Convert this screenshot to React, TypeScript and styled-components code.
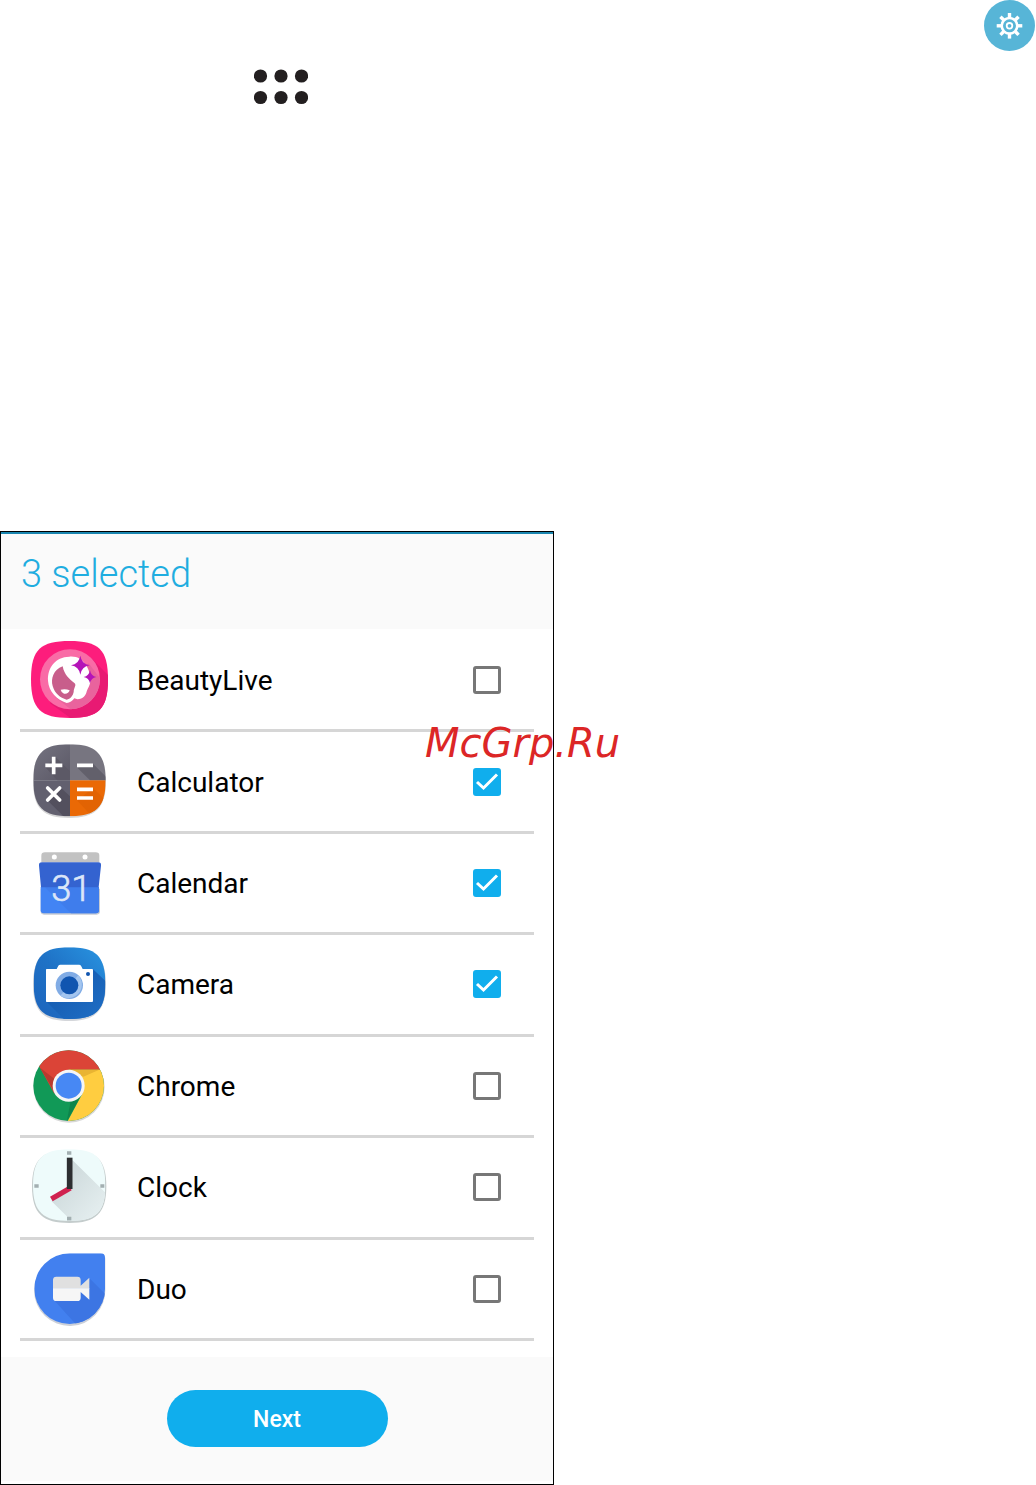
import React, { useState } from "react";
import styled, { createGlobalStyle } from "styled-components";

const GlobalStyle = createGlobalStyle`
  *, *::before, *::after { box-sizing: border-box; }
  body {
    margin: 0;
    background: #fff;
    color: #000;
    font-family: Roboto, "Noto Sans", sans-serif;
  }
`;

const Page = styled.main`
  display: flex;
  flex-direction: column;
`;

const TopBar = styled.header`
  display: flex;
  align-items: flex-start;
  justify-content: space-between;
  min-height: 531px;
  padding: 0 1px 0 254px;
`;

const DotsIcon = styled.svg`
  width: 54px;
  height: 36px;
  margin-top: 69px;
  fill: #231f20;
`;

const GearIcon = styled.svg`
  width: 51px;
  height: 51px;
`;

const Panel = styled.form`
  position: relative;
  width: 100%;
  max-width: 554px;
  padding-bottom: 3px;
  border: 1px solid #000;
`;

const PanelHeader = styled.div`
  height: 97px;
  padding: 16px 20px;
  border-top: 2px solid #1a86b0;
  background: #fafafa;
`;

const Title = styled.h1`
  margin: 0;
  font-size: 38px;
  line-height: 48px;
  font-weight: 300;
  color: #1fade0;
`;

const AppList = styled.ul`
  display: grid;
  grid-auto-rows: 1fr;
  height: 728px;
  margin: 0;
  padding: 2px 19px 16px;
  list-style: none;
`;

const AppRow = styled.li`
  display: flex;
  border-bottom: 3px solid #d6d6d6;
`;

const RowLabel = styled.label`
  flex: 1;
  display: flex;
  align-items: center;
  gap: 28px;
  padding: 0 33px 0 9px;
  cursor: pointer;
`;

const AppIcon = styled.svg`
  flex: none;
  width: 80px;
  height: 80px;
`;

const AppName = styled.span`
  flex: 1;
  padding-top: 2px;
  font-size: 28px;
  line-height: 32px;
`;

const CheckHolder = styled.span`
  display: grid;
  width: 28px;
  height: 28px;
  > * {
    grid-area: 1 / 1;
  }
`;

const CheckInput = styled.input`
  appearance: none;
  width: 28px;
  height: 28px;
  margin: 0;
  border: 3px solid #777;
  border-radius: 3px;
  background: #fff;
  cursor: pointer;
  &:checked {
    border-color: #10aeed;
    background: #10aeed;
  }
`;

const CheckMark = styled.svg`
  width: 28px;
  height: 28px;
  fill: none;
  stroke: #fff;
  stroke-width: 3;
  pointer-events: none;
`;

const PanelFooter = styled.div`
  display: flex;
  justify-content: center;
  padding: 33px 19px 34px;
  background: #fafafa;
`;

const NextButton = styled.button`
  width: 221px;
  height: 57px;
  padding: 2px 0 0;
  border: 0;
  border-radius: 29px;
  background: #10aeed;
  color: #fff;
  font-family: inherit;
  font-size: 23px;
  line-height: 28px;
  font-weight: 500;
  cursor: pointer;
`;

const Watermark = styled.span`
  position: absolute;
  top: 188px;
  left: 424px;
  font-family: "DejaVu Sans", sans-serif;
  font-style: italic;
  font-size: 40px;
  line-height: 46px;
  white-space: nowrap;
  color: #dc2626;
  pointer-events: none;
`;

const BeautyArt = () => (
  <AppIcon viewBox="27 15 240 240" aria-hidden="true">
    <defs>
      <clipPath id="beautyClip">
        <path d="M149 18C235 18 264 42 264 133S235 249 149 249 33 224 33 133 63 18 149 18Z" />
      </clipPath>
    </defs>
    <g clipPath="url(#beautyClip)">
      <rect x="30" y="15" width="240" height="240" fill="#fd1d7c" />
      <path d="M214 70L270 126V255H160L90 205Z" fill="#e81a73" />
    </g>
    <circle cx="150" cy="133" r="90" fill="#f96ba6" />
    <path d="M206 85L239 128A90 90 0 0 1 152 223L105 186Z" fill="#e9639d" />
    <path
      d="M148 65C106 66 82 98 84 137C86 170 111 194 140 204C149 204 158 198 163 190C176 197 195 188 199 173C202 160 211 151 211 137C212 106 195 81 180 72C171 66 160 64 148 65Z"
      fill="#fff"
    />
    <path
      d="M128 94C100 104 92 132 98 153C104 175 120 188 140 194C151 192 159 182 161 171C161 157 171 151 163 144C149 132 133 121 128 94Z"
      fill="#c85e8b"
    />
    <path d="M122 164Q136 160 149 166Q145 178 132 176Q124 173 122 164Z" fill="#fff" />
    <path d="M181 62Q185 87 209 91Q185 95 181 119Q177 95 153 91Q177 87 181 62Z" fill="#b414b8" />
    <path d="M210 106Q213 123 229 126Q213 129 210 145Q207 129 191 126Q207 123 210 106Z" fill="#b414b8" />
  </AppIcon>
);

const CalculatorArt = () => (
  <AppIcon viewBox="27 20 240 240" aria-hidden="true">
    <defs>
      <clipPath id="calcClip">
        <path d="M148 27C225 27 257 53 257 135S225 243 148 243 40 217 40 135 71 27 148 27Z" />
      </clipPath>
      <linearGradient id="calcGrey" x1="0" y1="0" x2="1" y2="1">
        <stop offset="0" stopColor="#757481" />
        <stop offset="1" stopColor="#5b5866" />
      </linearGradient>
    </defs>
    <path d="M148 31C225 31 258 57 258 138S225 248 148 248 39 222 39 138 71 31 148 31Z" fill="#d6d6d6" />
    <g clipPath="url(#calcClip)">
      <rect x="38" y="25" width="112" height="110" fill="url(#calcGrey)" />
      <rect x="150" y="25" width="112" height="110" fill="#777580" />
      <rect x="38" y="135" width="112" height="112" fill="#62606f" />
      <path d="M106 64L150 108V135H112L76 96Z" fill="#5c5966" />
      <path d="M219 85L262 128V135H210L172 97Z" fill="#62606b" />
      <path d="M120 155L150 183V247H135L82 195Z" fill="#53505e" />
      <rect x="150" y="135" width="112" height="112" fill="#ea6905" />
      <path d="M219 158L262 200V247H220L172 196Z" fill="#e26303" />
    </g>
    <path d="M101 64V117M76 90H127M171 90H219M171 162H219M171 188H219" stroke="#fff" strokeWidth="11" />
    <path d="M83 158L119 194M119 158L83 194" stroke="#fff" strokeWidth="11" strokeLinecap="round" />
  </AppIcon>
);

const CalendarArt = () => (
  <AppIcon viewBox="27 8 240 240" aria-hidden="true">
    <path d="M64 66V46Q64 36 75 36H227Q238 36 238 46V66Z" fill="#c2c2c2" />
    <circle cx="103" cy="50" r="7.500" fill="#fff" />
    <circle cx="195" cy="50" r="7.500" fill="#fff" />
    <path d="M62 145H240V213Q240 223 230 223H72Q62 223 62 213Z" fill="#c7cbd3" />
    <path d="M62 140H237V210Q237 219 228 219H71Q62 219 62 210Z" fill="#4284f4" />
    <path d="M75 141H237V210Q237 219 228 219H153Z" fill="#3f7dec" />
    <path d="M66 66H235Q244 66 243 76L236 141H63L57 76Q56 66 66 66Z" fill="#3463d0" />
    <text
      x="154"
      y="183"
      textAnchor="middle"
      fontFamily="Roboto, sans-serif"
      fontWeight="300"
      fontSize="109"
      fill="#dce6f8"
      stroke="#dce6f8"
      strokeWidth="2"
    >
      31
    </text>
  </AppIcon>
);

const CameraArt = () => (
  <AppIcon viewBox="27 11 240 240" aria-hidden="true">
    <defs>
      <clipPath id="camClip">
        <path d="M148 21C226 21 256 46 256 129S226 236 148 236 41 211 41 129 71 21 148 21Z" />
      </clipPath>
      <linearGradient id="camBlue" x1="1" y1="0" x2="0" y2="1">
        <stop offset="0" stopColor="#2996e2" />
        <stop offset="0.5" stopColor="#1f72c6" />
        <stop offset="1" stopColor="#1c63bc" />
      </linearGradient>
      <linearGradient id="camShade" x1="0" y1="0" x2="1" y2="1">
        <stop offset="0" stopColor="#1356aa" />
        <stop offset="1" stopColor="#1f6fc6" />
      </linearGradient>
    </defs>
    <path d="M148 26C226 26 258 52 258 132S226 242 148 242 39 216 39 132 71 26 148 26Z" fill="#d4d6da" />
    <g clipPath="url(#camClip)">
      <rect x="38" y="18" width="222" height="222" fill="url(#camBlue)" />
      <path d="M219 87L260 125V240H135L80 184Z" fill="url(#camShade)" />
    </g>
    <path
      d="M80 86H110L115 76Q117 73 121 73H177Q181 73 183 76L188 86H216Q219 86 219 89V182Q219 185 216 185H80Q78 185 78 182V88Q78 86 80 86Z"
      fill="#fff"
    />
    <circle cx="148" cy="135" r="41" fill="#81ace5" />
    <path d="M175 105A41 41 0 0 1 121 166Z" fill="#a3c5ef" />
    <circle cx="148" cy="135" r="27" fill="#1055b0" />
    <circle cx="204" cy="101" r="6" fill="#1055b0" />
  </AppIcon>
);

const ChromeArt = () => (
  <AppIcon viewBox="27 17 240 240" aria-hidden="true">
    <defs>
      <clipPath id="chromeClip">
        <circle cx="146" cy="136" r="106" />
      </clipPath>
    </defs>
    <circle cx="147" cy="140" r="107" fill="#d8d8d8" />
    <g clipPath="url(#chromeClip)">
      <rect x="36" y="28" width="220" height="220" fill="#119957" />
      <path d="M30 28H256V88H146L103 160L60 82Z" fill="#db4437" />
      <path d="M146 88H256V248H140L187 160Z" fill="#ffcd40" />
      <path d="M60 82L99 148L104 116Z" fill="#b93a2f" />
      <path d="M146 88H238L190 109Z" fill="#e9b432" />
      <path d="M187 158L140 244L152 183Z" fill="#0e854b" />
    </g>
    <circle cx="146" cy="136" r="48" fill="#f5f5f5" />
    <circle cx="146" cy="136" r="39" fill="#4788f4" />
  </AppIcon>
);

const ClockArt = () => (
  <AppIcon viewBox="27 21 240 240" aria-hidden="true">
    <defs>
      <clipPath id="clockClip">
        <path d="M148 28C226 28 256 53 256 136S226 243 148 243 39 218 39 136 71 28 148 28Z" />
      </clipPath>
      <linearGradient id="clockShade" x1="0" y1="0" x2="1" y2="1">
        <stop offset="0" stopColor="#c6d3d5" />
        <stop offset="1" stopColor="#e9f2f3" />
      </linearGradient>
    </defs>
    <path d="M148 31C227 31 259 57 259 139S227 249 148 249 36 223 36 139 71 31 148 31Z" fill="#c4cccc" />
    <g clipPath="url(#clockClip)">
      <rect x="36" y="25" width="224" height="222" fill="#eefbfb" />
      <path d="M157 60L262 164V248H160L94 183L140 146Z" fill="url(#clockShade)" />
    </g>
    <path d="M141 39H154M141 236H154M43 138H56M241 138H253" stroke="#a3afb1" strokeWidth="11" />
    <path d="M151 144L94 177" stroke="#d0224f" strokeWidth="16" />
    <path d="M149 53V147" stroke="#2d2e31" strokeWidth="17" />
  </AppIcon>
);

const DuoArt = () => (
  <AppIcon viewBox="27 26 240 240" aria-hidden="true">
    <defs>
      <clipPath id="duoClip">
        <path d="M149 39H242Q255 39 255 52V145A106 106 0 1 1 149 39Z" />
      </clipPath>
    </defs>
    <path d="M149 43H243Q256 43 256 55V146A107 107 0 1 1 149 43Z" fill="#ccd0d8" />
    <g clipPath="url(#duoClip)">
      <rect x="40" y="36" width="220" height="220" fill="#4280ef" />
      <path d="M207 112L260 165V260H175L101 178L180 160Z" fill="#3c75e3" />
    </g>
    <path d="M99 145V119Q99 109 109 109H172Q182 109 182 119V136L208 112V145Z" fill="#e0e0e0" />
    <path d="M99 144H208V178L182 155V172Q182 182 172 182H109Q99 182 99 172Z" fill="#f6f6f6" />
  </AppIcon>
);

const apps = [
  { id: "beautylive", name: "BeautyLive", Art: BeautyArt, selected: false },
  { id: "calculator", name: "Calculator", Art: CalculatorArt, selected: true },
  { id: "calendar", name: "Calendar", Art: CalendarArt, selected: true },
  { id: "camera", name: "Camera", Art: CameraArt, selected: true },
  { id: "chrome", name: "Chrome", Art: ChromeArt, selected: false },
  { id: "clock", name: "Clock", Art: ClockArt, selected: false },
  { id: "duo", name: "Duo", Art: DuoArt, selected: false },
];

const teeth = [0, 45, 90, 135, 180, 225, 270, 315];

export default function App() {
  const [selected, setSelected] = useState<string[]>(
    apps.filter((app) => app.selected).map((app) => app.id)
  );

  const toggle = (id: string) =>
    setSelected((current) =>
      current.includes(id) ? current.filter((item) => item !== id) : [...current, id]
    );

  return (
    <Page>
      <GlobalStyle />
      <TopBar>
        <DotsIcon viewBox="0 0 54 36" aria-hidden="true">
          {[6.5, 27, 47.5].map((x) => (
            <React.Fragment key={x}>
              <circle cx={x} cy="7" r="6.600" />
              <circle cx={x} cy="28.500" r="6.600" />
            </React.Fragment>
          ))}
        </DotsIcon>
        <GearIcon viewBox="0 0 51 51" aria-hidden="true">
          <circle cx="25.500" cy="25.500" r="25.500" fill="#57b5d7" />
          {teeth.map((angle) => (
            <path
              key={angle}
              d="M23.800 13H27.200V18H23.800Z"
              fill="#fff"
              transform={`rotate(${angle} 25.500 25.800)`}
            />
          ))}
          <circle cx="25.500" cy="25.800" r="7.800" fill="none" stroke="#fff" strokeWidth="2.600" />
          <circle cx="25.500" cy="25.800" r="2.800" fill="none" stroke="#fff" strokeWidth="1.800" />
        </GearIcon>
      </TopBar>
      <Panel onSubmit={(event) => event.preventDefault()}>
        <PanelHeader>
          <Title>{selected.length} selected</Title>
        </PanelHeader>
        <AppList>
          {apps.map(({ id, name, Art }) => {
            const checked = selected.includes(id);
            return (
              <AppRow key={id}>
                <RowLabel htmlFor={id}>
                  <Art />
                  <AppName>{name}</AppName>
                  <CheckHolder>
                    <CheckInput
                      id={id}
                      type="checkbox"
                      checked={checked}
                      onChange={() => toggle(id)}
                    />
                    {checked && (
                      <CheckMark viewBox="0 0 28 28" aria-hidden="true">
                        <path d="M4 14L10.500 20L24 6.500" />
                      </CheckMark>
                    )}
                  </CheckHolder>
                </RowLabel>
              </AppRow>
            );
          })}
        </AppList>
        <PanelFooter>
          <NextButton type="submit">Next</NextButton>
        </PanelFooter>
        <Watermark>McGrp.Ru</Watermark>
      </Panel>
    </Page>
  );
}
